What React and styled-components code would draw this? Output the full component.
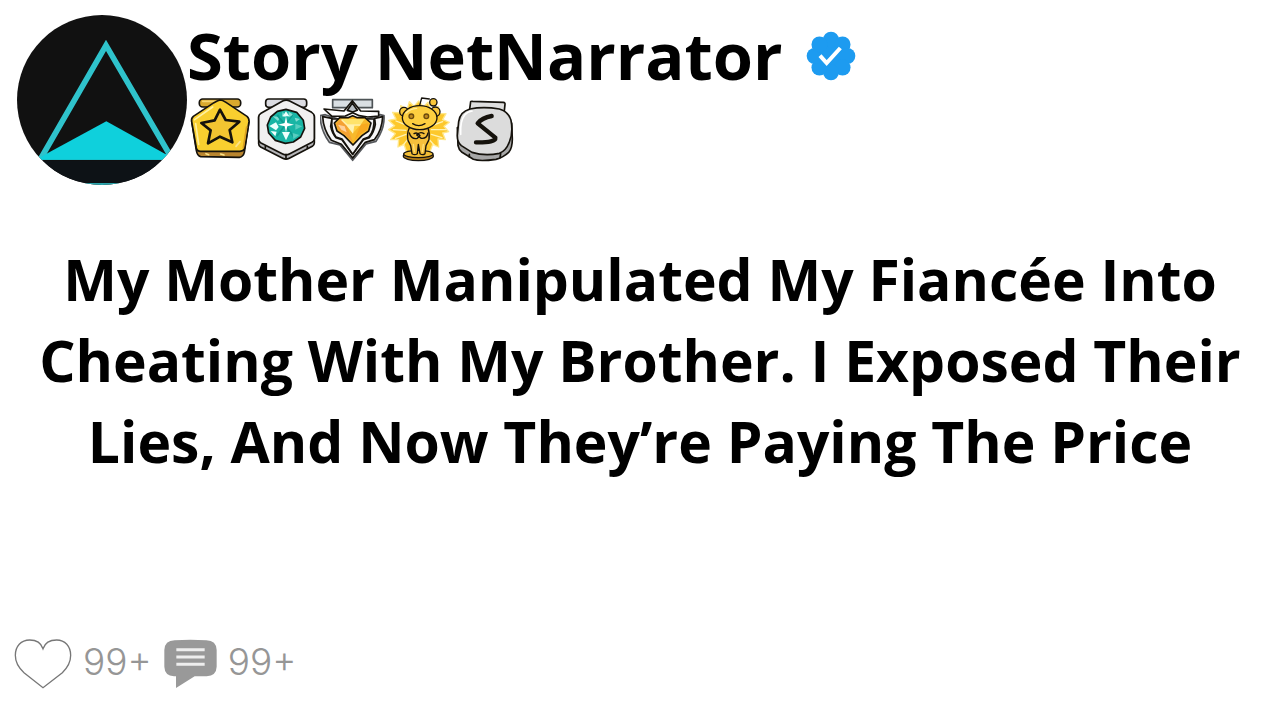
import React from 'react';
import styled, { createGlobalStyle } from 'styled-components';

const GlobalStyle = createGlobalStyle`
* { box-sizing: border-box; }
body {
  margin: 0;
  background-color: #ffffff;
  color: #000000;
  font-family: "Open Sans", "Noto Sans", sans-serif;
}
`
const Page = styled.main`
min-height: 100vh;
display: flex;
flex-direction: column;
`
const Header = styled.header`
display: flex;
align-items: flex-start;
padding: 15px 17px 0;
`
const Avatar = styled.svg`
width: 170px;
height: 170px;
flex-shrink: 0;
border-radius: 50%;
`
const Profile = styled.div`
display: flex;
flex-direction: column;
`
const NameRow = styled.div`
display: flex;
align-items: center;
gap: 24px;
`
const Name = styled.h2`
margin: 0;
font-size: 65px;
line-height: 80px;
font-weight: 700;
`
const Verified = styled.svg`
width: 50px;
height: 50px;
margin-top: 2px;
`
const Awards = styled.ul`
display: flex;
list-style: none;
margin: 0;
padding: 0 0 0 1px;
`
const Award = styled.li`
width: 66px;
height: 68px;
`
const AwardIcon = styled.svg`
width: 66px;
height: 68px;
stroke: #15120c;
stroke-width: ${(props) => props.$line || 5}px;
stroke-linejoin: round;
stroke-linecap: round;
`
const ThickPath = styled.path`
stroke-width: ${(props) => props.$line}px;
`
const Story = styled.h1`
margin: 54px 0;
padding: 0 24px;
font-size: 57px;
line-height: 81px;
font-weight: 700;
text-align: center;
`
const Footer = styled.footer`
display: flex;
gap: 12px;
margin-top: auto;
padding: 0 14px 31px;
`
const Action = styled.button`
display: flex;
align-items: flex-start;
gap: 11px;
padding: 0;
border: none;
background: none;
color: #969696;
font-family: Inter, "Liberation Sans", sans-serif;
font-size: 37px;
font-weight: 300;
line-height: 46px;
cursor: pointer;
`
const ActionIcon = styled.svg`
width: ${(props) => props.$width}px;
height: 50px;
`

const StarAward = () => (
  <AwardIcon viewBox="6 12 198 204">
    <rect x="40" y="24" width="124" height="24" rx="10" fill="#d9a92e" />
    <path d="M50 31H94" stroke="#f6d673" />
    <path d="M17 90L31 178Q34 195 44 197L160 199Q172 197 175 184L189 92Z" fill="#b9852f" />
    <path d="M102 27Q94 29 84 35L22 76Q15 82 17 91L31 171Q33 181 44 181L162 181Q173 181 176 172L189 92Q190 82 183 76L120 34Q109 27 102 27Z" fill="#f9cf2f" />
    <path d="M26 86L80 48M29 98L38 160" stroke="#fff0a0" fill="none" />
    <path d="M172 170L182 108" stroke="#d99f22" />
    <ThickPath $line={8} d="M102 56L86 88L46 96L74 118L66 157L102 137L139 154L131 117L160 92L119 87Z" fill="#f2c431" />
    <path d="M150 166l12-14M104 189l10 3M60 188l8 3" stroke="#fbe38a" />
  </AwardIcon>
)

const DiamondAward = () => (
  <AwardIcon viewBox="6 12 198 204">
    <rect x="41" y="24" width="123" height="25" rx="9" fill="#dcdce2" />
    <path d="M20 76V158Q20 164 26 168L92 202Q102 207 112 202L181 166Q187 162 187 156V74Z" fill="#b5b5b8" />
    <path d="M92 30Q103 25 113 30L179 64Q187 69 187 77V143Q187 150 180 154L112 189Q102 194 92 189L27 156Q20 152 20 145V79Q20 71 27 67Z" fill="#f1f0f0" />
    <path d="M102 190V204M40 166V172M166 166V172" />
    <path d="M102 55L134 64L154 88L158 112L146 138L124 153L100 157L70 148L50 126L46 102L56 78L76 61Z" fill="#19b5a5" />
    <g stroke="none">
      <path d="M62 76L86 78L78 90ZM92 62L102 78L90 76ZM110 62L126 72L110 78ZM128 80L144 84L132 92Z" fill="#83ddd2" />
      <path d="M78 70L128 136L124 140L74 74ZM126 70L76 138L72 134L122 70Z" fill="#0f9c90" />
      <path d="M92 76L102 61L112 76ZM52 105L72 94L80 108L72 118ZM90 123H114L102 148ZM56 120L74 122L70 136Z" fill="#edfffd" />
      <path d="M130 98L151 106L130 116ZM122 126L142 132L124 144Z" fill="#58cdbf" />
      <path d="M102 76L106 96L126 101L106 106L102 124L98 106L78 101L98 96Z" fill="#ffffff" />
    </g>
  </AwardIcon>
)

const GemAward = () => (
  <AwardIcon viewBox="12 12 198 204">
    <path d="M50 26H169V50H50Z" fill="#d9dfe3" stroke="#4d5356" />
    <path d="M12 74L28 71L66 84L154 84L192 71L204 74Q206 104 191 132L180 151L150 159L110 208L72 162L40 154Q14 118 12 74Z" fill="#cbcbce" stroke="#55585c" />
    <path d="M20 77L48 82L44 106Q48 126 60 140L78 146L110 190L142 146L160 140Q174 124 178 100L176 82L200 77Q198 118 175 146L148 154L110 201L76 160L46 148Q22 116 20 77Z" fill="#f7f7f7" />
    <path d="M48 84H174Q176 120 158 138L142 144L110 190L78 144L60 138Q44 118 48 84Z" fill="#f3f3f3" />
    <path d="M24 54L84 60L109 29L134 60L188 61L188 75L155 78L130 74L110 65L88 75L48 76Z" fill="#ffffff" />
    <path d="M94 58L109 36L124 58L110 63Z" fill="#b9c0c5" />
    <path d="M55 96L72 79L96 80L110 74L124 80L147 80L165 96L158 120L138 134L111 162L84 134L63 120Z" fill="#f7b92b" />
    <g stroke="none">
      <path d="M75 84L146 84L134 101L90 101Z" fill="#ffe36a" />
      <path d="M60 98L75 84L92 103L110 152L86 131L67 116Z" fill="#f5a234" />
      <path d="M66 101L86 106L92 124L76 116Z" fill="#ffd19a" />
      <path d="M92 101H134L111 126Z" fill="#ffd145" />
      <path d="M78 85L94 100H134V104H115L111 128L92 104L75 87Z" fill="#fff2b0" />
      <path d="M134 101L158 96L153 116L134 128L114 150Z" fill="#f8a91f" />
    </g>
  </AwardIcon>
)

const MascotAward = () => (
  <AwardIcon $line={4} viewBox="6 12 198 204">
    <path d="M104 30L118 48L132 34L140 54L164 46L162 68L186 68L176 86L196 94L180 106L194 122L176 126L184 146L162 144L164 168L146 160L138 182L104 170L68 184L60 160L42 168L44 146L20 146L34 128L14 116L32 104L14 88L36 84L26 64L50 66L50 44L70 54L76 32L90 46Z" fill="#fdc82c" stroke="#ffe78a" />
    <path d="M36 90L62 100M28 116L66 118M34 142L66 130M56 164L74 142M176 92L148 102M186 116L142 116M174 140L142 130M152 164L134 144" stroke="#fff3b4" />
    <ellipse cx="103" cy="195" rx="45" ry="14" fill="#b27c16" />
    <ellipse cx="103" cy="189" rx="44" ry="11" fill="#f2bd35" />
    <path d="M76 110Q68 128 72 148L80 164L84 188Q92 194 100 188L103 160L108 188Q116 194 123 188L126 164L135 146Q138 126 131 108Z" fill="#f5c03c" />
    <path d="M88 160L91 182M118 160L115 182" stroke="#ffe17a" />
    <circle cx="60" cy="62" r="13" fill="#f9c73a" />
    <circle cx="154" cy="62" r="14" fill="#f9c73a" />
    <path d="M107 43L113 21L136 24" fill="none" />
    <circle cx="148" cy="34" r="11" fill="#f9c73a" />
    <ellipse cx="107" cy="80" rx="52" ry="36" fill="#fdcf40" />
    <path d="M66 66Q78 53 98 52" stroke="#ffec9c" fill="none" />
    <circle cx="82" cy="76" r="7" fill="#c08a1e" stroke="#6b4a0d" />
    <circle cx="127" cy="76" r="7" fill="#c08a1e" stroke="#6b4a0d" />
    <path d="M86 98Q104 110 123 98" fill="none" />
    <path d="M76 126Q82 146 100 142L108 134Q100 122 90 128M132 126Q128 144 112 142L98 132Q108 120 120 128" fill="none" />
  </AwardIcon>
)

const SilverAward = () => (
  <AwardIcon viewBox="6 12 198 204">
    <path d="M62 32Q63 30 68 31L160 34Q166 35 165 40L162 68L58 62Z" fill="#dedede" />
    <path d="M22 110L24 164Q26 176 36 184L70 205Q90 212 138 205Q160 199 176 184Q187 172 187 144L185 96Z" fill="#a7a7a7" />
    <path d="M60 54Q100 46 148 54Q176 62 183 88Q190 126 178 153Q168 180 148 187Q104 196 66 184L34 164Q22 154 22 134L26 92Q30 62 60 54Z" fill="#dcdcdc" />
    <path d="M32 130Q30 90 44 72Q52 62 66 60" stroke="#ffffff" fill="none" />
    <path d="M58 190V198M152 188L150 200" />
    <ThickPath $line={13} d="M125 75Q96 80 83 97L136 140Q138 155 78 154" fill="none" />
  </AwardIcon>
)

// eight lobes round the centre of the verified mark
const lobes = [0, 45, 90, 135, 180, 225, 270, 315]

class App extends React.Component {
  state = {
    likes: '99+',
    comments: '99+',
    awards: [
      { id: 'star', Icon: StarAward },
      { id: 'diamond', Icon: DiamondAward },
      { id: 'gem', Icon: GemAward },
      { id: 'mascot', Icon: MascotAward },
      { id: 'silver', Icon: SilverAward },
    ],
  }

  render() {
    const renderAwards = this.state.awards.map(({ id, Icon }) => (
      <Award key={id}><Icon /></Award>
    ))

    return (
      <Page>
        <GlobalStyle />
        <Header>
          <Avatar viewBox="21 21 510 510">
            <rect x="21" y="21" width="510" height="510" fill="#111111" />
            <path d="M288 112L95 447H483Z" fill="none" stroke="#2fc3cc" strokeWidth="17" />
            <path d="M80 455L104 440L289 340L470 440L494 455Z" fill="#0fd0dc" />
            <path d="M21 458H531V524H21Z" fill="#0d1216" />
            <path d="M21 525H531V531H21Z" fill="#2aa4ab" />
          </Avatar>
          <Profile>
            <NameRow>
              <Name>Story NetNarrator</Name>
              <Verified viewBox="49 34 150 150" role="img" aria-label="Verified">
                <g fill="#1d9bf0">
                  <circle cx="124" cy="109" r="52" />
                  {lobes.map((angle) => (
                    <circle key={angle} cx="124" cy="60" r="24" transform={`rotate(${angle} 124 109)`} />
                  ))}
                </g>
                <path d="M91 108L111 130L152 85" fill="none" stroke="#ffffff" strokeWidth="12" />
              </Verified>
            </NameRow>
            <Awards>{renderAwards}</Awards>
          </Profile>
        </Header>
        <Story>
          My Mother Manipulated My Fiancée Into Cheating With My Brother. I Exposed Their Lies, And Now They’re Paying The Price
        </Story>
        <Footer>
          <Action type="button" aria-label="Like">
            <ActionIcon $width={58} viewBox="18 27 174 150">
              <path d="M105 56C99 38 85 30 65 30C39 30 22 49 22 76C22 96 30 112 48 128L105 173L163 128C180 112 188 96 188 76C188 49 171 30 146 30C126 30 111 38 105 56Z" fill="#ffffff" stroke="#777777" strokeWidth="4" />
            </ActionIcon>
            {this.state.likes}
          </Action>
          <Action type="button" aria-label="Comments">
            <ActionIcon $width={53} viewBox="468 27 159 150">
              <path d="M500 31Q547 28 595 31Q625 32 626 60V110Q625 137 596 139H560L504 174V139H498Q470 137 469 110V60Q470 32 500 31Z" fill="#999999" />
              <path d="M505 59H590M505 81H590M505 103H590" stroke="#eeeeee" strokeWidth="9" />
            </ActionIcon>
            {this.state.comments}
          </Action>
        </Footer>
      </Page>
    )
  }
}

export default App;
